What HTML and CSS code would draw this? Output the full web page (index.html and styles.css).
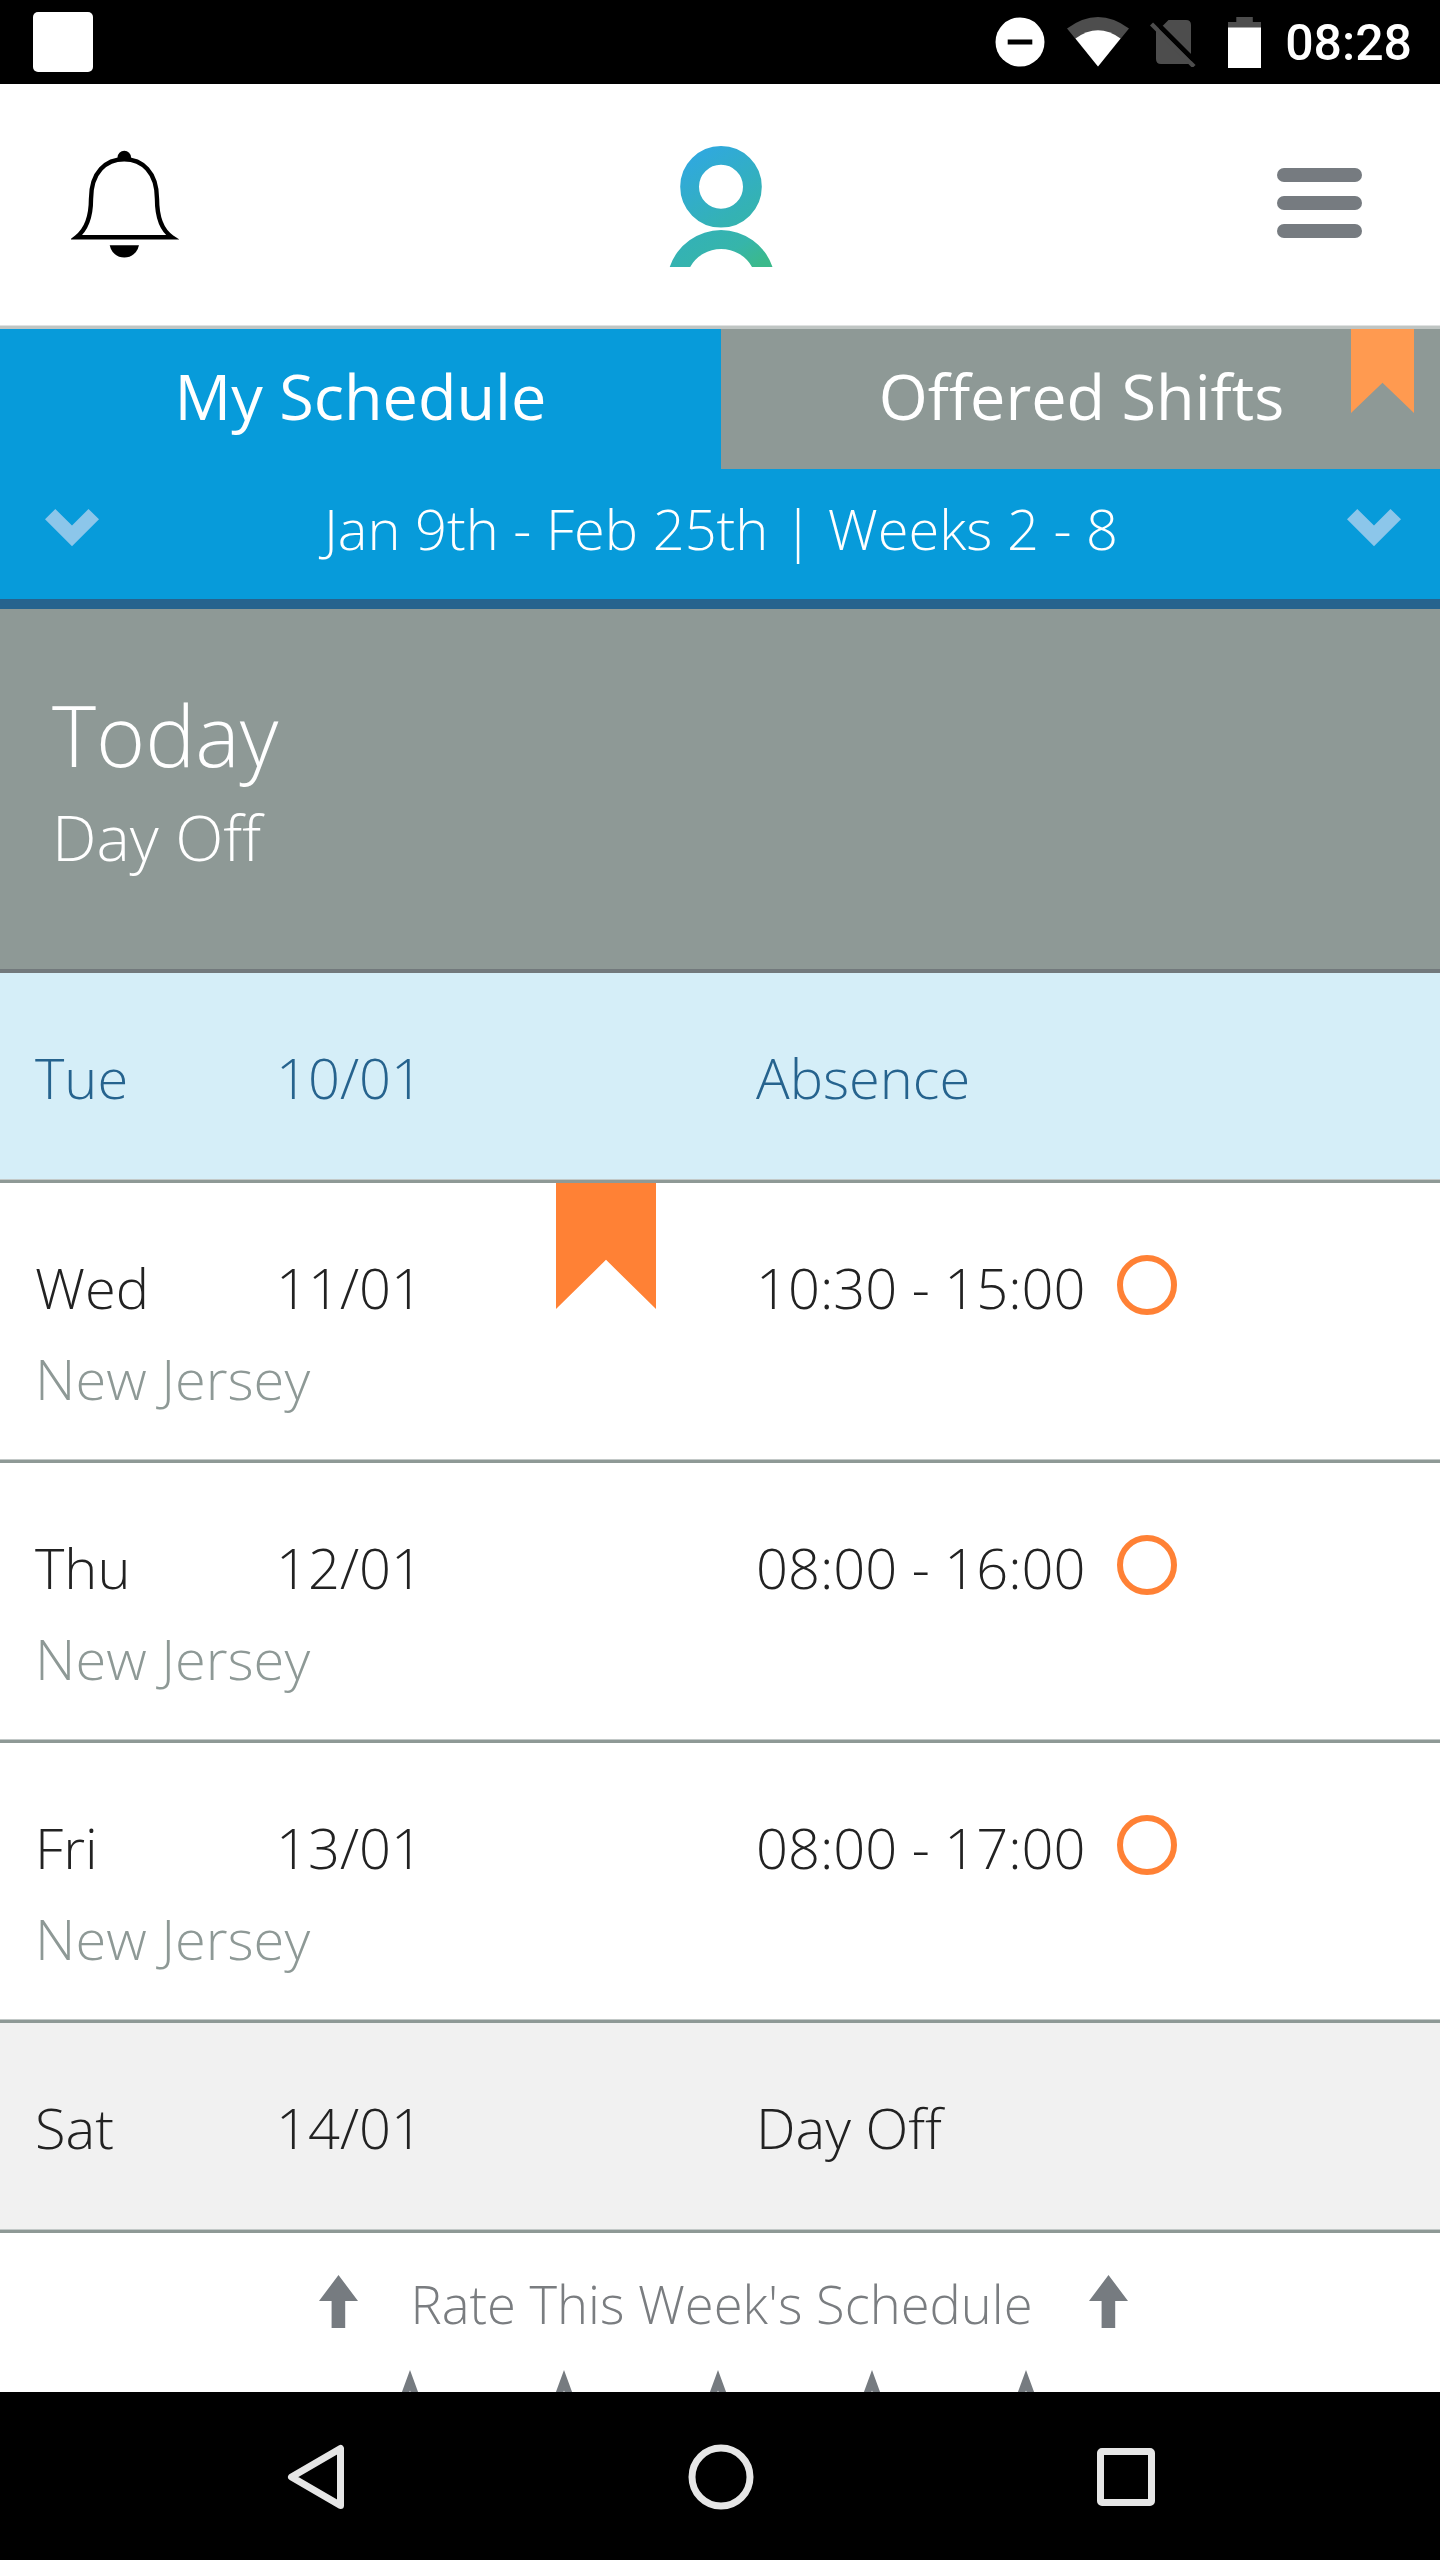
FILE: index.html
```html
<!DOCTYPE html>
<html lang="en">
<head>
    <meta charset="UTF-8">
    <meta name="viewport" content="width=device-width, initial-scale=1.0">
    <title>My Schedule</title>
    <link rel="stylesheet" href="styles.css">
</head>
<body>
    <div class="status-bar">
        <div class="app-badge"></div>
        <div class="status-icons">
            <svg class="icon-dnd" width="50" height="50" viewBox="0 0 50 50">
                <circle cx="25" cy="25" r="24.5" fill="#fff"/>
                <rect x="12.7" y="22.5" width="24.6" height="5" fill="#000"/>
            </svg>
            <svg class="icon-wifi" width="62" height="50" viewBox="0 0 62 50">
                <path d="M0 11.5Q31-11.5 62 11.5L31 49.5z" fill="#4d4d4d"/>
                <path d="M8.5 21.5Q31 5 53.5 21.5L31 49.5z" fill="#fff"/>
            </svg>
            <svg class="icon-sim" width="46" height="50" viewBox="0 0 46 50">
                <path d="M13 8.5L18.5 3H36q5 0 5 5V37L12.5 8.5zM6 12.5L40.5 47H11q-5 0-5-5z" fill="#4d4d4d"/>
                <path d="M1.5 7L44 49.5" stroke="#4d4d4d" stroke-width="4.4"/>
                <path d="M10.5 10L43 42.5" stroke="#000" stroke-width="4"/>
            </svg>
            <svg class="icon-battery" width="33" height="51" viewBox="0 0 33 51">
                <path d="M0 5H8.3V0H24.8V5H33V11H0z" fill="#4d4d4d"/>
                <rect y="10.5" width="33" height="40.5" fill="#fff"/>
            </svg>
            <span class="clock">08:28</span>
        </div>
    </div>

    <header class="header">
        <svg class="bell" width="108" height="110" viewBox="0 0 108 110">
            <path d="M5.5 87.2C16 79 20 65 20 49C20 22 35 9.2 53.2 9.2C71 9.2 86 22 86 49C86 65 89 79 101 87.2z" fill="none" stroke="#000" stroke-width="4.4" stroke-miterlimit="10"/>
            <path d="M46.5 9.5V7.5a6.8 6.8 0 0 1 13.6 0V9.5z"/>
            <path d="M38.7 95.3H68C66 103.5 60 107.5 53.3 107.5S40.5 103.5 38.7 95.3z"/>
        </svg>
        <svg class="logo" width="104" height="122" viewBox="0 0 104 122">
            <defs>
                <linearGradient id="brand" gradientUnits="userSpaceOnUse" x1="24" y1="14" x2="92" y2="118">
                    <stop offset="0" stop-color="#30a9dc"/>
                    <stop offset="0.55" stop-color="#34b2b4"/>
                    <stop offset="0.78" stop-color="#36b5aa"/>
                    <stop offset="1" stop-color="#3bb98b"/>
                </linearGradient>
            </defs>
            <circle cx="52" cy="40.8" r="31.4" fill="none" stroke="url(#brand)" stroke-width="18.8"/>
            <path d="M0.7 120.9A54.3 54.3 0 0 1 103.5 120.9H83A35.5 35.5 0 0 0 21.2 120.9z" fill="url(#brand)"/>
        </svg>
        <div class="menu">
            <span></span>
            <span></span>
            <span></span>
        </div>
    </header>

    <nav class="tabs">
        <div class="tab active">My Schedule</div>
        <div class="tab">Offered Shifts
            <div class="tab-flag"></div>
        </div>
    </nav>

    <div class="date-range">
        <svg width="54" height="38" viewBox="0 0 54 38"><path d="M0 10.2L10.3 0L27 16.4L43.5 0L54 10.2L27 37.3z" fill="#8cc6ea"/></svg>
        <span>Jan 9th - Feb 25th | Weeks 2 - 8</span>
        <svg width="54" height="38" viewBox="0 0 54 38"><path d="M0 10.2L10.3 0L27 16.4L43.5 0L54 10.2L27 37.3z" fill="#8cc6ea"/></svg>
    </div>

    <section class="today">
        <h1>Today</h1>
        <p>Day Off</p>
    </section>

    <main class="schedule">
        <div class="row absence">
            <span>Tue</span>
            <span>10/01</span>
            <span>Absence</span>
        </div>
        <div class="row shift">
            <div class="row-flag"></div>
            <span>Wed</span>
            <span>11/01</span>
            <span class="time">10:30 - 15:00 <i class="ring"></i></span>
            <span class="place">New Jersey</span>
        </div>
        <div class="row shift">
            <span>Thu</span>
            <span>12/01</span>
            <span class="time">08:00 - 16:00 <i class="ring"></i></span>
            <span class="place">New Jersey</span>
        </div>
        <div class="row shift">
            <span>Fri</span>
            <span>13/01</span>
            <span class="time">08:00 - 17:00 <i class="ring"></i></span>
            <span class="place">New Jersey</span>
        </div>
        <div class="row day-off">
            <span>Sat</span>
            <span>14/01</span>
            <span>Day Off</span>
        </div>
    </main>

    <section class="rate">
        <div class="rate-title">
            <svg width="39" height="53" viewBox="0 0 39 53"><path d="M19.5 0L39 26H26.2V53H12.6V26H0z" fill="#767b80"/></svg>
            <span>Rate This Week's Schedule</span>
            <svg width="39" height="53" viewBox="0 0 39 53"><path d="M19.5 0L39 26H26.2V53H12.6V26H0z" fill="#767b80"/></svg>
        </div>
        <!-- only the tips of the stars show above the nav bar -->
        <div class="stars">
            <svg viewBox="0 0 80 80"><path d="M40 0L51 30H80L57 49L65 78L40 61L15 78L23 49L0 30H29zM40 20.5L33 38H14L30 51L24 69L40 57L56 69L50 51L66 38H47z"/></svg>
            <svg viewBox="0 0 80 80"><path d="M40 0L51 30H80L57 49L65 78L40 61L15 78L23 49L0 30H29zM40 20.5L33 38H14L30 51L24 69L40 57L56 69L50 51L66 38H47z"/></svg>
            <svg viewBox="0 0 80 80"><path d="M40 0L51 30H80L57 49L65 78L40 61L15 78L23 49L0 30H29zM40 20.5L33 38H14L30 51L24 69L40 57L56 69L50 51L66 38H47z"/></svg>
            <svg viewBox="0 0 80 80"><path d="M40 0L51 30H80L57 49L65 78L40 61L15 78L23 49L0 30H29zM40 20.5L33 38H14L30 51L24 69L40 57L56 69L50 51L66 38H47z"/></svg>
            <svg viewBox="0 0 80 80"><path d="M40 0L51 30H80L57 49L65 78L40 61L15 78L23 49L0 30H29zM40 20.5L33 38H14L30 51L24 69L40 57L56 69L50 51L66 38H47z"/></svg>
        </div>
    </section>

    <footer class="nav-bar">
        <svg width="66" height="66" viewBox="0 0 66 66"><path d="M57.5 4.5V61.5L8.5 33z" fill="none" stroke="#e6e6e6" stroke-width="7" stroke-linejoin="round"/></svg>
        <svg width="66" height="66" viewBox="0 0 66 66"><circle cx="33" cy="33" r="29" fill="none" stroke="#e6e6e6" stroke-width="7"/></svg>
        <svg width="66" height="66" viewBox="0 0 66 66"><rect x="7.5" y="7.5" width="51" height="51" rx="1.5" fill="none" stroke="#e6e6e6" stroke-width="7"/></svg>
    </footer>
</body>
</html>
```
FILE: styles.css
```css
* {
    box-sizing: border-box;
}
body {
    margin: 0;
    width: 1440px;
    height: 2560px;
    display: flex;
    flex-direction: column;
    overflow: hidden;
    background-color: #fff;
    font-family: 'Open Sans', sans-serif;
    font-weight: 300;
    font-size: 56px;
    line-height: 76px;
    color: #222;
}
svg {
    display: block;
    flex: none;
}

/* status bar */
.status-bar {
    height: 84px;
    flex: none;
    display: flex;
    justify-content: space-between;
    align-items: center;
    padding: 0 28px 0 33px;
    background-color: #000;
}
.app-badge {
    width: 60px;
    height: 60px;
    border-radius: 5px;
    background-color: #fff;
}
.status-icons {
    display: flex;
    align-items: center;
}
.icon-wifi {
    margin-left: 22px;
}
.icon-sim {
    margin-left: 21px;
}
.icon-battery {
    margin-left: 32px;
}
.clock {
    margin-left: 24px;
    padding-top: 3px;
    font-family: Roboto, sans-serif;
    font-weight: 500;
    font-size: 50px;
    line-height: 81px;
    color: #fff;
}

/* header */
.header {
    height: 245px;
    flex: none;
    display: grid;
    grid-template-columns: 1fr auto 1fr;
    align-items: center;
    padding: 0 70px 0 71px;
    border-bottom: 3px solid #bfc5c3;
    box-shadow: inset 0 -1px #e0e2e2;
}
.logo {
    margin-top: 4px;
}
.menu {
    justify-self: end;
    width: 85px;
    margin-right: 8px;
    margin-top: -4px;
    display: flex;
    flex-direction: column;
    gap: 14px;
}
.menu span {
    height: 14px;
    border-radius: 7px;
    background-color: #767b80;
}

/* tabs */
.tabs {
    height: 140px;
    flex: none;
    display: flex;
}
.tab {
    position: relative;
    width: 719px;
    padding-left: 2px;
    text-align: center;
    font-weight: 400;
    font-size: 63px;
    line-height: 134px;
    color: #fff;
    background-color: #8e9996;
}
.tab.active {
    width: 721px;
    padding-left: 0;
    background-color: #079bda;
}
.tab-flag {
    position: absolute;
    top: 0;
    right: 26px;
    width: 63px;
    height: 84px;
    background-color: #ff9a50;
    clip-path: polygon(0 0, 100% 0, 100% 100%, 50% 64%, 0 100%);
}
.date-range {
    height: 140px;
    flex: none;
    display: flex;
    justify-content: space-between;
    align-items: center;
    padding: 0 39px 12px 45px;
    border-bottom: 10px solid #26638e;
    color: #fff;
    background-color: #079bda;
}
.date-range span {
    margin-right: 4px;
}

/* today */
.today {
    height: 364px;
    flex: none;
    padding: 69px 52px 0;
    border-bottom: 4px solid #72797c;
    color: #fff;
    background-color: #8e9996;
}
.today h1 {
    margin: 0;
    font-weight: 300;
    font-size: 84px;
    line-height: 114px;
}
.today p {
    margin: 0;
    font-size: 63px;
    line-height: 90px;
}

/* schedule */
.row {
    position: relative;
    height: 210px;
    display: grid;
    grid-template-columns: 241px 480px 1fr;
    align-content: start;
    row-gap: 15px;
    padding: 66px 35px 0;
    border-bottom: 3px solid #8e9996;
    box-shadow: inset 0 -1px #c3c9c8;
}
.shift {
    height: 280px;
}
.absence {
    color: #26638e;
    background-color: #d5eef8;
}
.day-off {
    background-color: #f1f1f1;
}
.time {
    display: flex;
    align-items: center;
}
.ring {
    width: 60px;
    height: 60px;
    margin-left: 31px;
    margin-bottom: 4px;
    border: 6px solid #ff8135;
    border-radius: 50%;
}
.place {
    grid-column: 1 / 3;
    color: #8e9996;
}
.row-flag {
    position: absolute;
    top: 0;
    left: 556px;
    width: 100px;
    height: 126px;
    background-color: #ff8135;
    clip-path: polygon(0 0, 100% 0, 100% 100%, 50% 61%, 0 100%);
}

/* rating */
.rate {
    height: 159px;
    flex: none;
    overflow: hidden;
    padding-top: 31px;
    color: #7a7d80;
}
.rate-title {
    display: flex;
    justify-content: center;
    align-items: center;
    gap: 53px;
    height: 76px;
    padding-left: 7px;
    font-size: 52.5px;
}
.rate-title span {
    padding-top: 3px;
    margin-right: 4px;
}
.rate-title svg {
    margin-top: -1px;
}
.stars {
    display: flex;
    justify-content: center;
    gap: 74px;
    margin-top: 30px;
    padding-right: 5px;
}
.stars svg {
    width: 80px;
    height: 80px;
    fill: #767b80;
    fill-rule: evenodd;
}

.nav-bar {
    height: 168px;
    flex: none;
    display: flex;
    justify-content: center;
    align-items: center;
    gap: 339px;
    padding: 1px 0 0 1px;
    background-color: #000;
}
```
